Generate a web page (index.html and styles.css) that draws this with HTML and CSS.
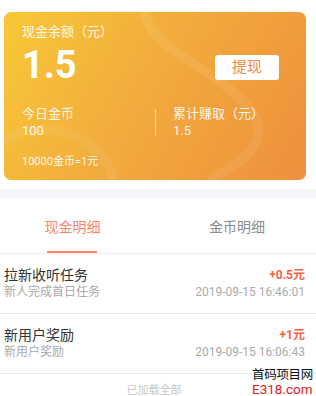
FILE: index.html
```html
<!DOCTYPE html>
<html lang="zh">
<head>
<meta charset="utf-8">
<link rel="stylesheet" href="styles.css">
</head>
<body>
<div class="page">
  <section class="card">
    <svg class="deco" width="302" height="168" viewBox="0 0 302 168" aria-hidden="true">
      <path d="M140 0 C150 40 200 50 240 90 C275 125 240 150 205 168" fill="none" stroke="rgba(255,255,255,0.08)" stroke-width="10"/>
      <path d="M0 128 C40 105 95 120 110 168" fill="none" stroke="rgba(255,255,255,0.07)" stroke-width="10"/>
    </svg>
    <div class="label">现金余额（元）</div>
    <div class="balance-row">
      <div class="balance">1.5</div>
      <button class="withdraw">提现</button>
    </div>
    <div class="stats">
      <div class="stat">
        <div class="stat-label">今日金币</div>
        <div class="stat-value">100</div>
      </div>
      <div class="vline"></div>
      <div class="stat stat-right">
        <div class="stat-label">累计赚取（元）</div>
        <div class="stat-value">1.5</div>
      </div>
    </div>
    <div class="rate">10000金币=1元</div>
  </section>
  <div class="band"></div>
  <nav class="tabs">
    <div class="tab active">现金明细</div>
    <div class="tab">金币明细</div>
  </nav>
  <ul class="list">
    <li class="row">
      <div class="left">
        <div class="title">拉新收听任务</div>
        <div class="sub">新人完成首日任务</div>
      </div>
      <div class="right">
        <div class="amount">+0.5元</div>
        <div class="sub">2019-09-15 16:46:01</div>
      </div>
    </li>
    <li class="row">
      <div class="left">
        <div class="title">新用户奖励</div>
        <div class="sub">新用户奖励</div>
      </div>
      <div class="right">
        <div class="amount">+1元</div>
        <div class="sub">2019-09-15 16:06:43</div>
      </div>
    </li>
  </ul>
  <div class="footer">已加载全部</div>
  <div class="watermark">
    <div class="wm-top">首码项目网</div>
    <div class="wm-bottom">E318.com</div>
  </div>
</div>
</body>
</html>
```
FILE: styles.css
```css
* { box-sizing: border-box; margin: 0; padding: 0; }
html, body { background: #fff; }
body {
  font-family: Roboto, "Noto Sans CJK SC", sans-serif;
  width: 316px;
  height: 396px;
  overflow: hidden;
}
.page { position: relative; height: 396px; padding-top: 12px; }

.card {
  position: relative;
  margin: 0 10px 0 4px;
  height: 168px;
  border-radius: 7px;
  overflow: hidden;
  background: linear-gradient(120deg, #f8c837 0%, #f2ac3d 45%, #ee8f3c 100%);
  color: #fff;
  padding: 12px 0 0 18px;
}
.deco { position: absolute; left: 0; top: 0; }
.label {
  position: relative;
  font-size: 13px;
  line-height: 16px;
  color: rgba(255,255,255,0.92);
}
.balance-row {
  position: relative;
  display: flex;
  align-items: center;
  justify-content: space-between;
  padding-right: 27px;
  margin-top: 5px;
  height: 40px;
}
.balance {
  font-size: 38px;
  font-weight: 700;
  line-height: 40px;
}
.withdraw {
  width: 64px;
  height: 25px;
  border: none;
  border-radius: 3px;
  background: #fff;
  color: #ef8c3f;
  font-family: Roboto, "Noto Sans CJK SC", sans-serif;
  font-size: 15px;
  line-height: 25px;
  margin-top: 4px;
}
.stats {
  position: relative;
  display: flex;
  align-items: center;
  margin-top: 20px;
}
.stat { width: 133px; }
.stat-right { padding-left: 17px; }
.stat-label { font-size: 13px; line-height: 17px; color: rgba(255,255,255,0.92); }
.stat-value { font-size: 13px; line-height: 17px; color: rgba(255,255,255,0.95); }
.vline {
  width: 1px;
  height: 27px;
  background: rgba(255,255,255,0.6);
}
.rate {
  position: relative;
  margin-top: 16px;
  font-size: 11px;
  line-height: 14px;
  color: rgba(255,255,255,0.95);
}

.band {
  margin-top: 9px;
  height: 9px;
  background: #f4f5f9;
}

.tabs {
  display: grid;
  grid-template-columns: 145px 184px;
  height: 56px;
  border-bottom: 1px solid #eeeef2;
}
.tab {
  display: flex;
  align-items: center;
  justify-content: center;
  font-size: 14px;
  color: #8a8a8a;
  position: relative;
}
.tab.active { color: #f7876b; }
.tab.active::after {
  content: "";
  position: absolute;
  left: 47px;
  width: 50px;
  bottom: 0;
  height: 2px;
  background: #f7876b;
}

.list { list-style: none; }
.row {
  display: flex;
  justify-content: space-between;
  padding: 11px 11px 14px 4px;
  border-bottom: 1px solid #e8e8ee;
}
.title { font-size: 14px; line-height: 20px; color: #333; }
.sub { font-size: 12px; line-height: 14px; color: #aaa; }
.right { text-align: right; }
.amount {
  font-size: 12px;
  line-height: 20px;
  font-weight: 700;
  color: #f5643f;
}

.footer {
  text-align: center;
  padding-top: 10px;
  font-size: 11px;
  line-height: 14px;
  color: #c8c8c8;
  padding-right: 8px;
}

.watermark {
  position: absolute;
  right: 3px;
  bottom: 0;
  background: #fff;
  line-height: 14px;
  padding-top: 1px;
}
.wm-top { font-size: 12.5px; color: #111; letter-spacing: -0.3px; }
.wm-bottom { font-size: 13.5px; color: #e0201c; }
```
